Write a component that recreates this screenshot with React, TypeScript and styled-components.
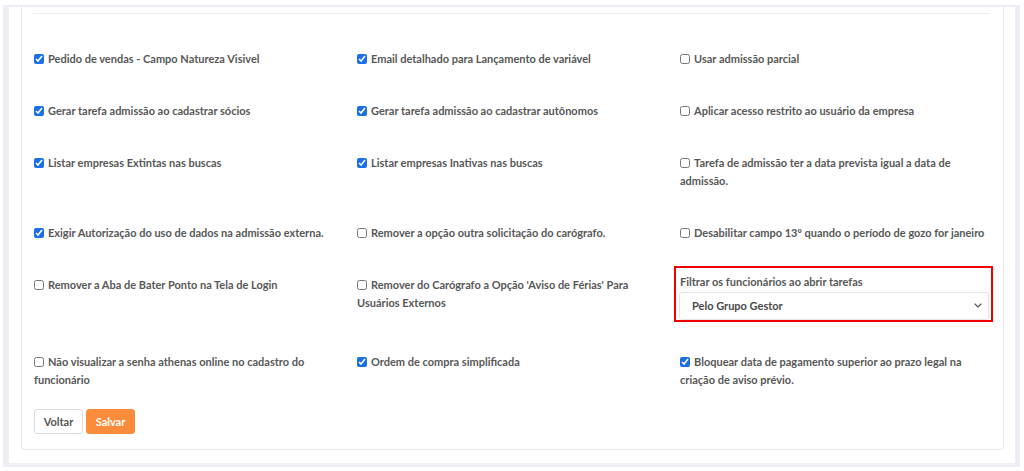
import React from "react";
import styled, { createGlobalStyle } from "styled-components";

const Global = createGlobalStyle`
  html, body { margin: 0; padding: 0; background: #ffffff; }
  body { font-family: Lato, "Open Sans", "Liberation Sans", sans-serif; }
  * { box-sizing: border-box; }
`;

const Frame = styled.div`
  margin: 5px 4px 0 3px;
  height: 462px;
  background: #ffffff;
  border-style: solid;
  border-color: #eceef3;
  border-width: 2px 5px 4px 6px;
  padding: 0 11px 13px 12px;
  display: flex;
  flex-direction: column;
`;

const Card = styled.div`
  flex: 1;
  border: 1px solid #e6e6e6;
  border-top: none;
  border-radius: 0 0 4px 4px;
  padding: 6px 12px 15px 11px;
  display: flex;
  flex-direction: column;
`;

const Rule = styled.div`
  height: 1px;
  background: #eeeeee;
  margin-right: 1px;
`;

const Grid = styled.div`
  display: grid;
  grid-template-columns: repeat(3, 310px);
  column-gap: 13px;
  row-gap: 34px;
  margin-top: 36px;
  padding-left: 1px;
  align-items: start;
`;

const Option = styled.label`
  display: block;
  font-size: 11px;
  line-height: 18px;
  font-weight: 700;
  color: #585858;
`;

const Box = styled.input`
  width: 10px;
  height: 10px;
  margin: 0 4px 0 0;
  vertical-align: -1px;
  accent-color: #1a6ee6;
`;

const Highlight = styled.div`
  margin: -10px -3px -3px -6px;
  border: 2px solid #f20000;
  padding: 6px 0 0 4px;
  display: flex;
  flex-direction: column;
  gap: 2px;
  overflow: hidden;
  height: 56px;
`;

const FieldLabel = styled.div`
  font-size: 11px;
  line-height: 16px;
  font-weight: 700;
  color: #585858;
`;

const Select = styled.div`
  height: 30px;
  margin-left: -1px;
  margin-right: 2px;
  border: 1px solid #e4e4e4;
  border-radius: 3px;
  padding: 0 6px 2px 12px;
  display: flex;
  align-items: center;
  justify-content: space-between;
  font-size: 11px;
  font-weight: 700;
  color: #4a4a4a;
  background: #fff;
`;

const Actions = styled.div`
  display: flex;
  gap: 3px;
  margin-top: 20px;
  padding-left: 1px;
`;

const Button = styled.button<{ $primary?: boolean }>`
  height: 25px;
  width: 49px;
  padding: 0;
  border-radius: 3px;
  font-family: inherit;
  font-size: 11px;
  font-weight: 700;
  cursor: pointer;
  border: 1px solid ${(p) => (p.$primary ? "#fb8c3b" : "#dcdcdc")};
  background: ${(p) => (p.$primary ? "#fb8c3b" : "#ffffff")};
  color: ${(p) => (p.$primary ? "#ffffff" : "#555555")};
`;

type Item = { text: string; checked: boolean } | { select: true };

const items: Item[] = [
  { text: "Pedido de vendas - Campo Natureza Visivel", checked: true },
  { text: "Email detalhado para Lançamento de variável", checked: true },
  { text: "Usar admissão parcial", checked: false },
  { text: "Gerar tarefa admissão ao cadastrar sócios", checked: true },
  { text: "Gerar tarefa admissão ao cadastrar autônomos", checked: true },
  { text: "Aplicar acesso restrito ao usuário da empresa", checked: false },
  { text: "Listar empresas Extintas nas buscas", checked: true },
  { text: "Listar empresas Inativas nas buscas", checked: true },
  { text: "Tarefa de admissão ter a data prevista igual a data de admissão.", checked: false },
  { text: "Exigir Autorização do uso de dados na admissão externa.", checked: true },
  { text: "Remover a opção outra solicitação do carógrafo.", checked: false },
  { text: "Desabilitar campo 13º quando o período de gozo for janeiro", checked: false },
  { text: "Remover a Aba de Bater Ponto na Tela de Login", checked: false },
  { text: "Remover do Carógrafo a Opção 'Aviso de Férias' Para Usuários Externos", checked: false },
  { select: true },
  { text: "Não visualizar a senha athenas online no cadastro do funcionário", checked: false },
  { text: "Ordem de compra simplificada", checked: true },
  { text: "Bloquear data de pagamento superior ao prazo legal na criação de aviso prévio.", checked: true },
];

const Chevron = () => (
  <svg width="8" height="5" viewBox="0 0 8 5" fill="none">
    <path d="M1 1l3 3 3-3" stroke="#555" strokeWidth="1.1" strokeLinecap="round" strokeLinejoin="round" />
  </svg>
);

export default function App() {
  return (
    <>
      <Global />
      <Frame>
        <Card>
          <Rule />
          <Grid>
            {items.map((it, i) =>
              "select" in it ? (
                <Highlight key={i}>
                  <FieldLabel>Filtrar os funcionários ao abrir tarefas</FieldLabel>
                  <Select>
                    <span>Pelo Grupo Gestor</span>
                    <Chevron />
                  </Select>
                </Highlight>
              ) : (
                <Option key={i}>
                  <Box type="checkbox" defaultChecked={it.checked} />
                  {it.text}
                </Option>
              )
            )}
          </Grid>
          <Actions>
            <Button>Voltar</Button>
            <Button $primary>Salvar</Button>
          </Actions>
        </Card>
      </Frame>
    </>
  );
}
